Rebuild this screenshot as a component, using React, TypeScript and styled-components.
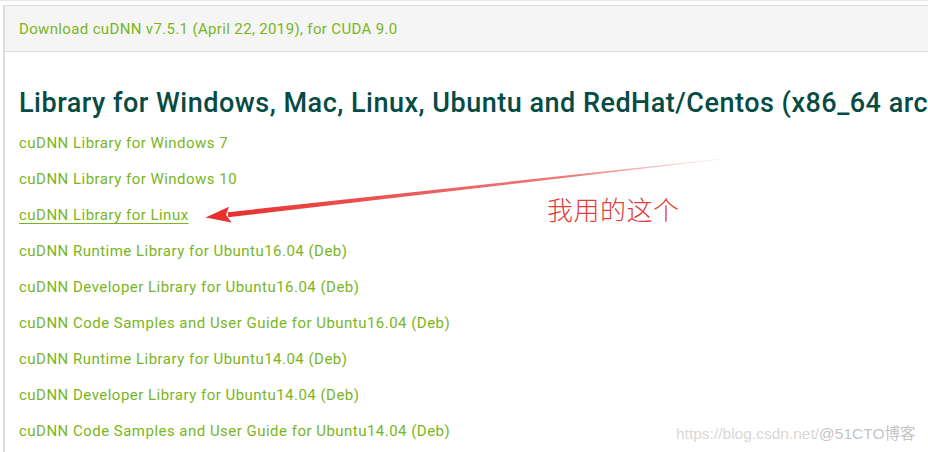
import React from "react";
import styled, { createGlobalStyle } from "styled-components";

const Global = createGlobalStyle`
  html, body { margin: 0; padding: 0; background: #ffffff; }
  body { width: 928px; height: 452px; overflow: hidden; font-family: Roboto, "Liberation Sans", sans-serif; }
`;

const Page = styled.div`
  position: relative;
  width: 928px;
  height: 452px;
  overflow: hidden;
  background: #fff;
  border-top: 1px solid #e6e6e6;
  box-sizing: border-box;
  padding: 4px 0 0 3px;
`;

const Panel = styled.div`
  border-left: 2px solid #dcdcdc;
  border-top: 1px solid #dcdcdc;
  height: 100%;
  box-sizing: border-box;
`;

const HeaderBar = styled.div`
  background: #f5f5f5;
  border-bottom: 1px solid #dcdcdc;
  height: 45px;
  display: flex;
  align-items: center;
  padding-left: 14px;
  font-size: 15px;
  color: #7ab51d;
  letter-spacing: 0.35px;
`;

const Content = styled.div`
  padding: 31px 0 0 14px;
`;

const Heading = styled.h2`
  margin: 0;
  font-size: 27px;
  font-weight: 500;
  line-height: 40px;
  color: #074b45;
  white-space: nowrap;
  letter-spacing: 0.5px;
`;

const LinkList = styled.ul`
  list-style: none;
  margin: 0;
  padding: 2px 0 0 0;
`;

const LinkItem = styled.li`
  line-height: 36px;
  font-size: 15px;
  color: #7ab51d;
  letter-spacing: 0.48px;
`;

const LinkText = styled.a<{ $active?: boolean }>`
  color: inherit;
  text-decoration: ${(p) => (p.$active ? "underline" : "none")};
  text-underline-offset: 3px;
  text-decoration-thickness: 1px;
`;

const Note = styled.div`
  position: absolute;
  left: 547px;
  top: 193px;
  font-family: "Noto Sans CJK SC", sans-serif;
  font-weight: 300;
  font-size: 26px;
  line-height: 30px;
  color: #e23b3b;
  letter-spacing: 0.5px;
`;

const ArrowSvg = styled.svg`
  position: absolute;
  left: 0;
  top: 0;
  pointer-events: none;
`;

const Watermark = styled.div`
  position: absolute;
  left: 676px;
  top: 424px;
  font-family: "Liberation Sans", Arial, sans-serif;
  font-size: 15.5px;
  line-height: 18px;
  color: #d8d8d8;
  white-space: nowrap;
`;

const WatermarkStrong = styled.span`
  color: #c4c4c4;
  font-family: "Liberation Sans", "Noto Sans CJK SC", sans-serif;
`;

const links = [
  "cuDNN Library for Windows 7",
  "cuDNN Library for Windows 10",
  "cuDNN Library for Linux",
  "cuDNN Runtime Library for Ubuntu16.04 (Deb)",
  "cuDNN Developer Library for Ubuntu16.04 (Deb)",
  "cuDNN Code Samples and User Guide for Ubuntu16.04 (Deb)",
  "cuDNN Runtime Library for Ubuntu14.04 (Deb)",
  "cuDNN Developer Library for Ubuntu14.04 (Deb)",
  "cuDNN Code Samples and User Guide for Ubuntu14.04 (Deb)",
];

export default function App() {
  return (
    <>
      <Global />
      <Page>
        <Panel>
          <HeaderBar>Download cuDNN v7.5.1 (April 22, 2019), for CUDA 9.0</HeaderBar>
          <Content>
            <Heading>Library for Windows, Mac, Linux, Ubuntu and RedHat/Centos (x86_64 architecture)</Heading>
            <LinkList>
              {links.map((l, i) => (
                <LinkItem key={l}>
                  <LinkText $active={i === 2}>{l}</LinkText>
                </LinkItem>
              ))}
            </LinkList>
          </Content>
        </Panel>
        <ArrowSvg width="928" height="452" viewBox="0 0 928 452">
          <defs>
            <linearGradient id="shaft" x1="722" y1="158" x2="228" y2="214" gradientUnits="userSpaceOnUse">
              <stop offset="0" stopColor="#f08a8a" stopOpacity="0.2" />
              <stop offset="0.3" stopColor="#ea5a5a" stopOpacity="0.8" />
              <stop offset="1" stopColor="#e8312f" />
            </linearGradient>
          </defs>
          <polygon points="722.1,158.3 721.9,157.7 227.7,211.2 228.3,216.2" fill="url(#shaft)" />
          <polygon points="205.5,216.5 229,205.8 226,213.8 231.5,221.5" fill="#e8312f" />
        </ArrowSvg>
        <Note>我用的这个</Note>
        <Watermark>
          https://blog.csdn.net/<WatermarkStrong>@51CTO博客</WatermarkStrong>
        </Watermark>
      </Page>
    </>
  );
}
